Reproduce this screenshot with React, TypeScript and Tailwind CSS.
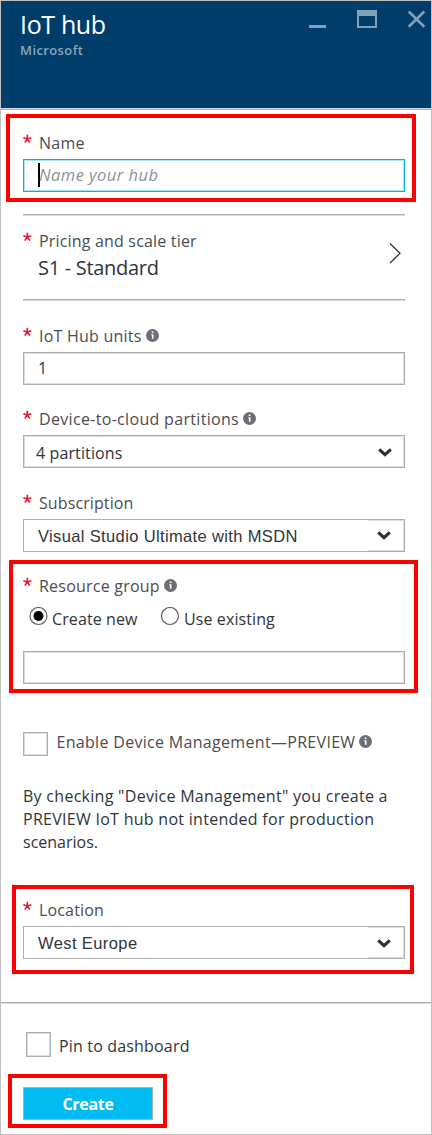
import type { ReactNode } from "react";

const Info = ({ className = "" }: { className?: string }) => (
  <svg viewBox="0 0 13 13" className={`block h-[13px] w-[13px] shrink-0 ${className}`}>
    <circle cx="6.5" cy="6.5" r="6.5" fill="#6b6e75" />
    <path d="M5.7 2.6h1.8v1.5H5.7zM5.2 5.2h2.3v4.6H5.9V6.2h-.7z" fill="#fff" />
  </svg>
);

const Chevron = ({ className = "" }: { className?: string }) => (
  <svg viewBox="0 0 14 9" className={`block h-[9px] w-[14px] shrink-0 ${className}`}>
    <path d="M1.2 1.3 7 6.7l5.800-5.400" fill="none" stroke="#2b2f36" strokeWidth="3.100" />
  </svg>
);

const Star = () => (
  <svg viewBox="0 0 10 10" className="mt-[2px] mr-[7px] block h-[10px] w-[9px] shrink-0">
    <path d="M4.8 5.1V.3M4.8 5.1.4 3.7M4.8 5.1l4.5-1.4M4.8 5.1 2 9M4.8 5.1 7.6 9" fill="none" stroke="#f0142c" strokeWidth="1.8" />
  </svg>
);

function Label({ children, className = "", info = false }: { children: ReactNode; className?: string; info?: boolean }) {
  return (
    <div className="flex h-[22px] items-start whitespace-nowrap leading-[22px] text-[#4c4c4e]">
      <Star />
      <span className={className}>{children}</span>
      {info && <Info className="mt-[4px] ml-[4px]" />}
    </div>
  );
}

const boxStyles = {
  normal: "border-[#adadad] shadow-[inset_0_0_0_1px_#dedede]",
  plain: "border-[#adadad]",
  focused: "border-[#00b4ea] shadow-[inset_0_0_0_1px_#a6e4f8]",
};

function Box({
  children,
  className = "",
  gap = "mt-[5px]",
  variant = "normal",
}: {
  children?: ReactNode;
  className?: string;
  gap?: string;
  variant?: keyof typeof boxStyles;
}) {
  return (
    <div className={`flex h-[33px] w-[382px] shrink-0 whitespace-nowrap border ${gap} ${boxStyles[variant]} ${className}`}>
      {children}
    </div>
  );
}

const Rule = ({ className = "" }: { className?: string }) => (
  <div className={`h-[2px] shrink-0 border-t border-[#b0b0b0] bg-[#dadada] ${className}`} />
);

const Check = ({ className = "" }: { className?: string }) => (
  <div className={`w-[25px] shrink-0 border border-[#adadad] shadow-[inset_0_0_0_1px_#dedede] ${className}`} />
);

export default function App() {
  return (
    <div className="flex h-[1135px] w-[432px] flex-col overflow-hidden border border-[#c0c0c0] bg-white text-[16px] text-[#30343b] [font-family:'Open_Sans','Noto_Sans',sans-serif]">
      <header className="flex h-[107px] shrink-0 justify-between bg-[#003d6b] pl-[19px]">
        <div className="whitespace-nowrap">
          <h1 className="mt-[6px] h-[34px] text-[25px] font-normal leading-[34px] tracking-[-0.35px] text-white">IoT hub</h1>
          <p className="text-[13px] font-semibold leading-[18px] tracking-[0.4px] text-[#8aa7be]">Microsoft</p>
        </div>
        <svg viewBox="0 0 117 20" className="mt-[8px] mr-[5px] block h-[20px] w-[117px]">
          <path d="M0 16h17v3H0z" fill="#84a0b8" />
          <path d="M48 1h20v18H48zm2 6v10h16V7z" fill="#84a0b8" fillRule="evenodd" />
          <path d="m99.700 2.500 15.600 15.300m0-15.300-15.600 15.300" stroke="#84a0b8" strokeWidth="2.600" fill="none" />
        </svg>
      </header>
      <div className="h-[2px] shrink-0 border-b border-[#b0b0b0] bg-[#dadada]" />

      <section className="mt-[4px] ml-[5px] h-[88px] w-[410px] shrink-0 border-4 border-[#ff0000] pt-[14px] pl-[13px]">
        <Label className="tracking-[0.25px]">Name</Label>
        <Box variant="focused" className="pl-[14px]">
          <span className="mt-[3px] h-[24px] w-[2px] bg-black" />
          <span className="mt-[4px] -ml-[1px] text-[16.500px] italic leading-[22px] tracking-[0.450px] text-[#8e9196]">Name your hub</span>
        </Box>
      </section>

      <Rule className="mt-[12px] ml-[22px] w-[382px]" />
      <section className="mt-[14px] ml-[22px] flex h-[51px] w-[382px] shrink-0 justify-between">
        <div>
          <Label className="tracking-[0.180px]">Pricing and scale tier</Label>
          <p className="mt-[2px] pl-[15px] text-[20px] leading-[28px] tracking-[-0.300px]">S1 - Standard</p>
        </div>
        <svg viewBox="0 0 12 22" className="mt-[12px] mr-[4px] block h-[22px] w-[12px]">
          <path d="m1 1.500 10 9.800L1 21" fill="none" stroke="#30343b" strokeWidth="1.300" />
        </svg>
      </section>
      <Rule className="mt-[18px] ml-[22px] w-[382px]" />

      <section className="mt-[24px] ml-[22px] shrink-0">
        <Label info className="tracking-[0.230px]">IoT Hub units</Label>
        <Box><span className="mt-[4px] ml-[14px] leading-[22px]">1</span></Box>
      </section>
      <section className="mt-[23px] ml-[22px] shrink-0">
        <Label info className="tracking-[0.320px]">Device-to-cloud partitions</Label>
        <Box className="justify-between">
          <span className="mt-[6px] ml-[12px] leading-[22px] tracking-[0.120px]">4 partitions</span>
          <Chevron className="mt-[12px] mr-[12px]" />
        </Box>
      </section>
      <section className="mt-[24px] ml-[22px] shrink-0">
        <Label className="tracking-[0.100px]">Subscription</Label>
        <Box variant="plain" className="justify-between">
          <span className="mt-[5px] ml-[14px] text-[16.500px] leading-[22px] tracking-[0.360px] [font-family:'Liberation_Sans',sans-serif]">Visual Studio Ultimate with MSDN</span>
          <span className="block h-[31px] w-[36px] border-y border-r border-[#dedede] pt-[10px] pl-[9px]"><Chevron /></span>
        </Box>
      </section>

      <section className="mt-[8px] ml-[8px] h-[133px] w-[409px] shrink-0 border-4 border-[#ff0000] pt-[11px] pl-[10px]">
        <Label info className="tracking-[0.220px]">Resource group</Label>
        <div className="mt-[11px] flex h-[22px] whitespace-nowrap leading-[22px] tracking-[0.100px]">
          <svg viewBox="0 0 19 19" className="-mt-[1px] ml-[6px] block h-[19px] w-[19px]">
            <circle cx="9.500" cy="9" r="8.500" fill="#fff" stroke="#606060" strokeWidth="1.200" />
            <circle cx="9.500" cy="9" r="5" fill="#000" />
          </svg>
          <span className="ml-[4px] w-[109px]">Create new</span>
          <svg viewBox="0 0 19 19" className="-mt-[1px] block h-[19px] w-[19px]">
            <circle cx="9" cy="9" r="8.500" fill="#fff" stroke="#606060" strokeWidth="1.200" />
          </svg>
          <span className="ml-[4px]">Use existing</span>
        </div>
        <Box gap="mt-[21px]" />
      </section>

      <section className="mt-[38px] ml-[22px] flex h-[25px] shrink-0 whitespace-nowrap leading-[22px] text-[#4c4c4e]">
        <Check className="mt-[1px] h-[24px]" />
        <span className="ml-[8.500px] tracking-[0.310px]">Enable Device Management—PREVIEW</span>
        <Info className="mt-[4px] ml-[4px]" />
      </section>
      <p className="mt-[29px] ml-[22px] h-[69px] shrink-0 whitespace-nowrap leading-[23px] tracking-[0.280px]">
        <span className="block">By checking "Device Management" you create a</span>
        <span className="block">PREVIEW IoT hub not intended for production</span>
        <span className="block tracking-[0px]">scenarios.</span>
      </p>

      <section className="mt-[31px] ml-[11px] h-[89px] w-[402px] shrink-0 border-4 border-[#ff0000] pt-[10px] pl-[7px]">
        <Label className="tracking-[0.150px]">Location</Label>
        <Box variant="plain" className="justify-between">
          <span className="mt-[5px] ml-[14px] text-[16.500px] leading-[22px] tracking-[0.400px] [font-family:'Liberation_Sans',sans-serif]">West Europe</span>
          <span className="block h-[31px] w-[36px] border-y border-r border-[#dedede] pt-[11px] pl-[9px]"><Chevron /></span>
        </Box>
      </section>

      <Rule className="mt-[28px] w-full" />
      <section className="mt-[28px] ml-[25px] flex h-[25px] shrink-0 whitespace-nowrap">
        <Check className="h-[25px]" />
        <span className="mt-[3px] ml-[8px] leading-[22px] tracking-[0.170px]">Pin to dashboard</span>
      </section>
      <section className="mt-[17px] ml-[7px] h-[54px] w-[159px] shrink-0 border-4 border-[#ff0000] pt-[9px] pl-[11px]">
        <button className="flex h-[33px] w-[130px] justify-center border border-[#a3b4bc] bg-[#00bcf2] pt-[5px] text-[16px] font-bold leading-[22px] tracking-[-0.300px] text-white">
          Create
        </button>
      </section>
    </div>
  );
}
